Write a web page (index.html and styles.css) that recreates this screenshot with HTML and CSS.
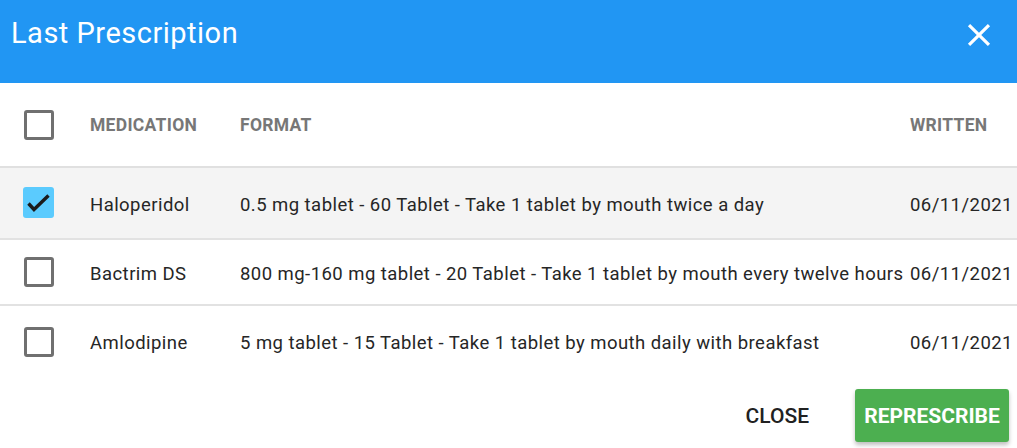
FILE: index.html
```html
<!DOCTYPE html>
<html>
<head>
<meta charset="utf-8">
<link rel="stylesheet" href="styles.css">
</head>
<body>
<div class="dialog">
  <header class="dialog-header">
    <h1 class="dialog-title">Last Prescription</h1>
    <button class="icon-btn" aria-label="Close">
      <svg width="38" height="38" viewBox="0 0 24 24"><path fill="#fff" d="M19 6.41L17.59 5 12 10.59 6.41 5 5 6.41 10.59 12 5 17.59 6.41 19 12 13.41 17.59 19 19 17.59 13.41 12z"/></svg>
    </button>
  </header>
  <div class="table-wrap">
    <table class="rx-table">
      <colgroup>
        <col class="c-check"><col class="c-med"><col class="c-format"><col class="c-date">
      </colgroup>
      <thead>
        <tr class="head-row">
          <th><span class="cb"></span></th>
          <th>MEDICATION</th>
          <th>FORMAT</th>
          <th>WRITTEN</th>
        </tr>
      </thead>
      <tbody>
        <tr class="row row-1 selected">
          <td><span class="cb checked"><svg width="31" height="31" viewBox="0 0 31 31"><polyline points="5.5,16.5 11,22.5 25.5,8.5" fill="none" stroke="#1b1b1b" stroke-width="3.4"/></svg></span></td>
          <td>Haloperidol</td>
          <td>0.5 mg tablet - 60 Tablet - Take 1 tablet by mouth twice a day</td>
          <td>06/11/2021</td>
        </tr>
        <tr class="row row-2">
          <td><span class="cb"></span></td>
          <td>Bactrim DS</td>
          <td>800 mg-160 mg tablet - 20 Tablet - Take 1 tablet by mouth every twelve hours</td>
          <td>06/11/2021</td>
        </tr>
        <tr class="row row-3">
          <td><span class="cb"></span></td>
          <td>Amlodipine</td>
          <td>5 mg tablet - 15 Tablet - Take 1 tablet by mouth daily with breakfast</td>
          <td>06/11/2021</td>
        </tr>
      </tbody>
    </table>
  </div>
  <footer class="dialog-actions">
    <button class="btn btn-text">CLOSE</button>
    <button class="btn btn-primary">REPRESCRIBE</button>
  </footer>
</div>
</body>
</html>
```
FILE: styles.css
```css
* { box-sizing: border-box; }
html, body {
  margin: 0;
  padding: 0;
  background: #fff;
  overflow: hidden;
}
body {
  font-family: Roboto, "Liberation Sans", Arial, sans-serif;
  width: 1017px;
  height: 448px;
}
.dialog {
  width: 1017px;
  height: 448px;
  display: flex;
  flex-direction: column;
}
.dialog-header {
  height: 83px;
  background: #2196f3;
  display: flex;
  align-items: flex-start;
  justify-content: space-between;
  padding: 0 19px 0 11px;
  flex: none;
}
.dialog-title {
  margin: 0;
  color: #fff;
  font-weight: 400;
  font-size: 29px;
  letter-spacing: 0.5px;
  line-height: 29px;
  padding-top: 19px;
}
.icon-btn {
  border: 0;
  background: transparent;
  padding: 0;
  margin-top: 16px;
  width: 38px;
  height: 38px;
  display: block;
}
.icon-btn svg { display: block; }
.table-wrap {
  overflow: hidden;
  flex: none;
}
.rx-table {
  border-collapse: collapse;
  table-layout: fixed;
  width: 1060px;
}
.c-check { width: 90px; }
.c-med { width: 150px; }
.c-format { width: 670px; }
.c-date { width: 150px; }
.rx-table th, .rx-table td {
  padding: 0;
  text-align: left;
  vertical-align: middle;
  white-space: nowrap;
}
.rx-table th:first-child, .rx-table td:first-child {
  padding-left: 24px;
}
.head-row {
  height: 84px;
  border-bottom: 2px solid #e0e0e0;
}
.head-row th {
  font-size: 17.5px;
  font-weight: 700;
  color: #777777;
  letter-spacing: 0.3px;
}
.row td {
  font-size: 18.5px;
  letter-spacing: 0.45px;
  color: #262626;
  padding-top: 3px;
}
.row td:first-child { padding-top: 0; }
.row-1 { height: 72px; border-bottom: 2px solid #e2e2e2; }
.row-2 { height: 66px; border-bottom: 2px solid #e2e2e2; }
.row-3 { height: 72px; }
.selected { background: #f4f4f4; }
.cb {
  display: block;
  width: 30px;
  height: 30px;
  border: 3px solid #707070;
  border-radius: 3px;
  background: #fff;
}
.cb.checked {
  border: 0;
  background: #5bcbfe;
  width: 31px;
  height: 31px;
  position: relative;
  top: -1px;
  left: -1px;
}
.cb.checked svg { display: block; }
.dialog-actions {
  display: flex;
  justify-content: flex-end;
  align-items: center;
  gap: 23px;
  padding: 0 8px 0 0;
  margin-top: 12px;
}
.btn {
  font-family: Roboto, "Liberation Sans", Arial, sans-serif;
  border: 0;
  background: transparent;
  cursor: pointer;
  font-size: 21px;
  text-transform: uppercase;
}
.btn-text {
  color: #212121;
  font-weight: 500;
  padding: 0 23px;
  height: 53px;
}
.btn-primary {
  background: #4caf50;
  color: #fff;
  font-weight: 700;
  height: 53px;
  width: 154px;
  padding: 0;
  border-radius: 3px;
  box-shadow: 0 3px 4px rgba(0,0,0,0.25);
}
```
